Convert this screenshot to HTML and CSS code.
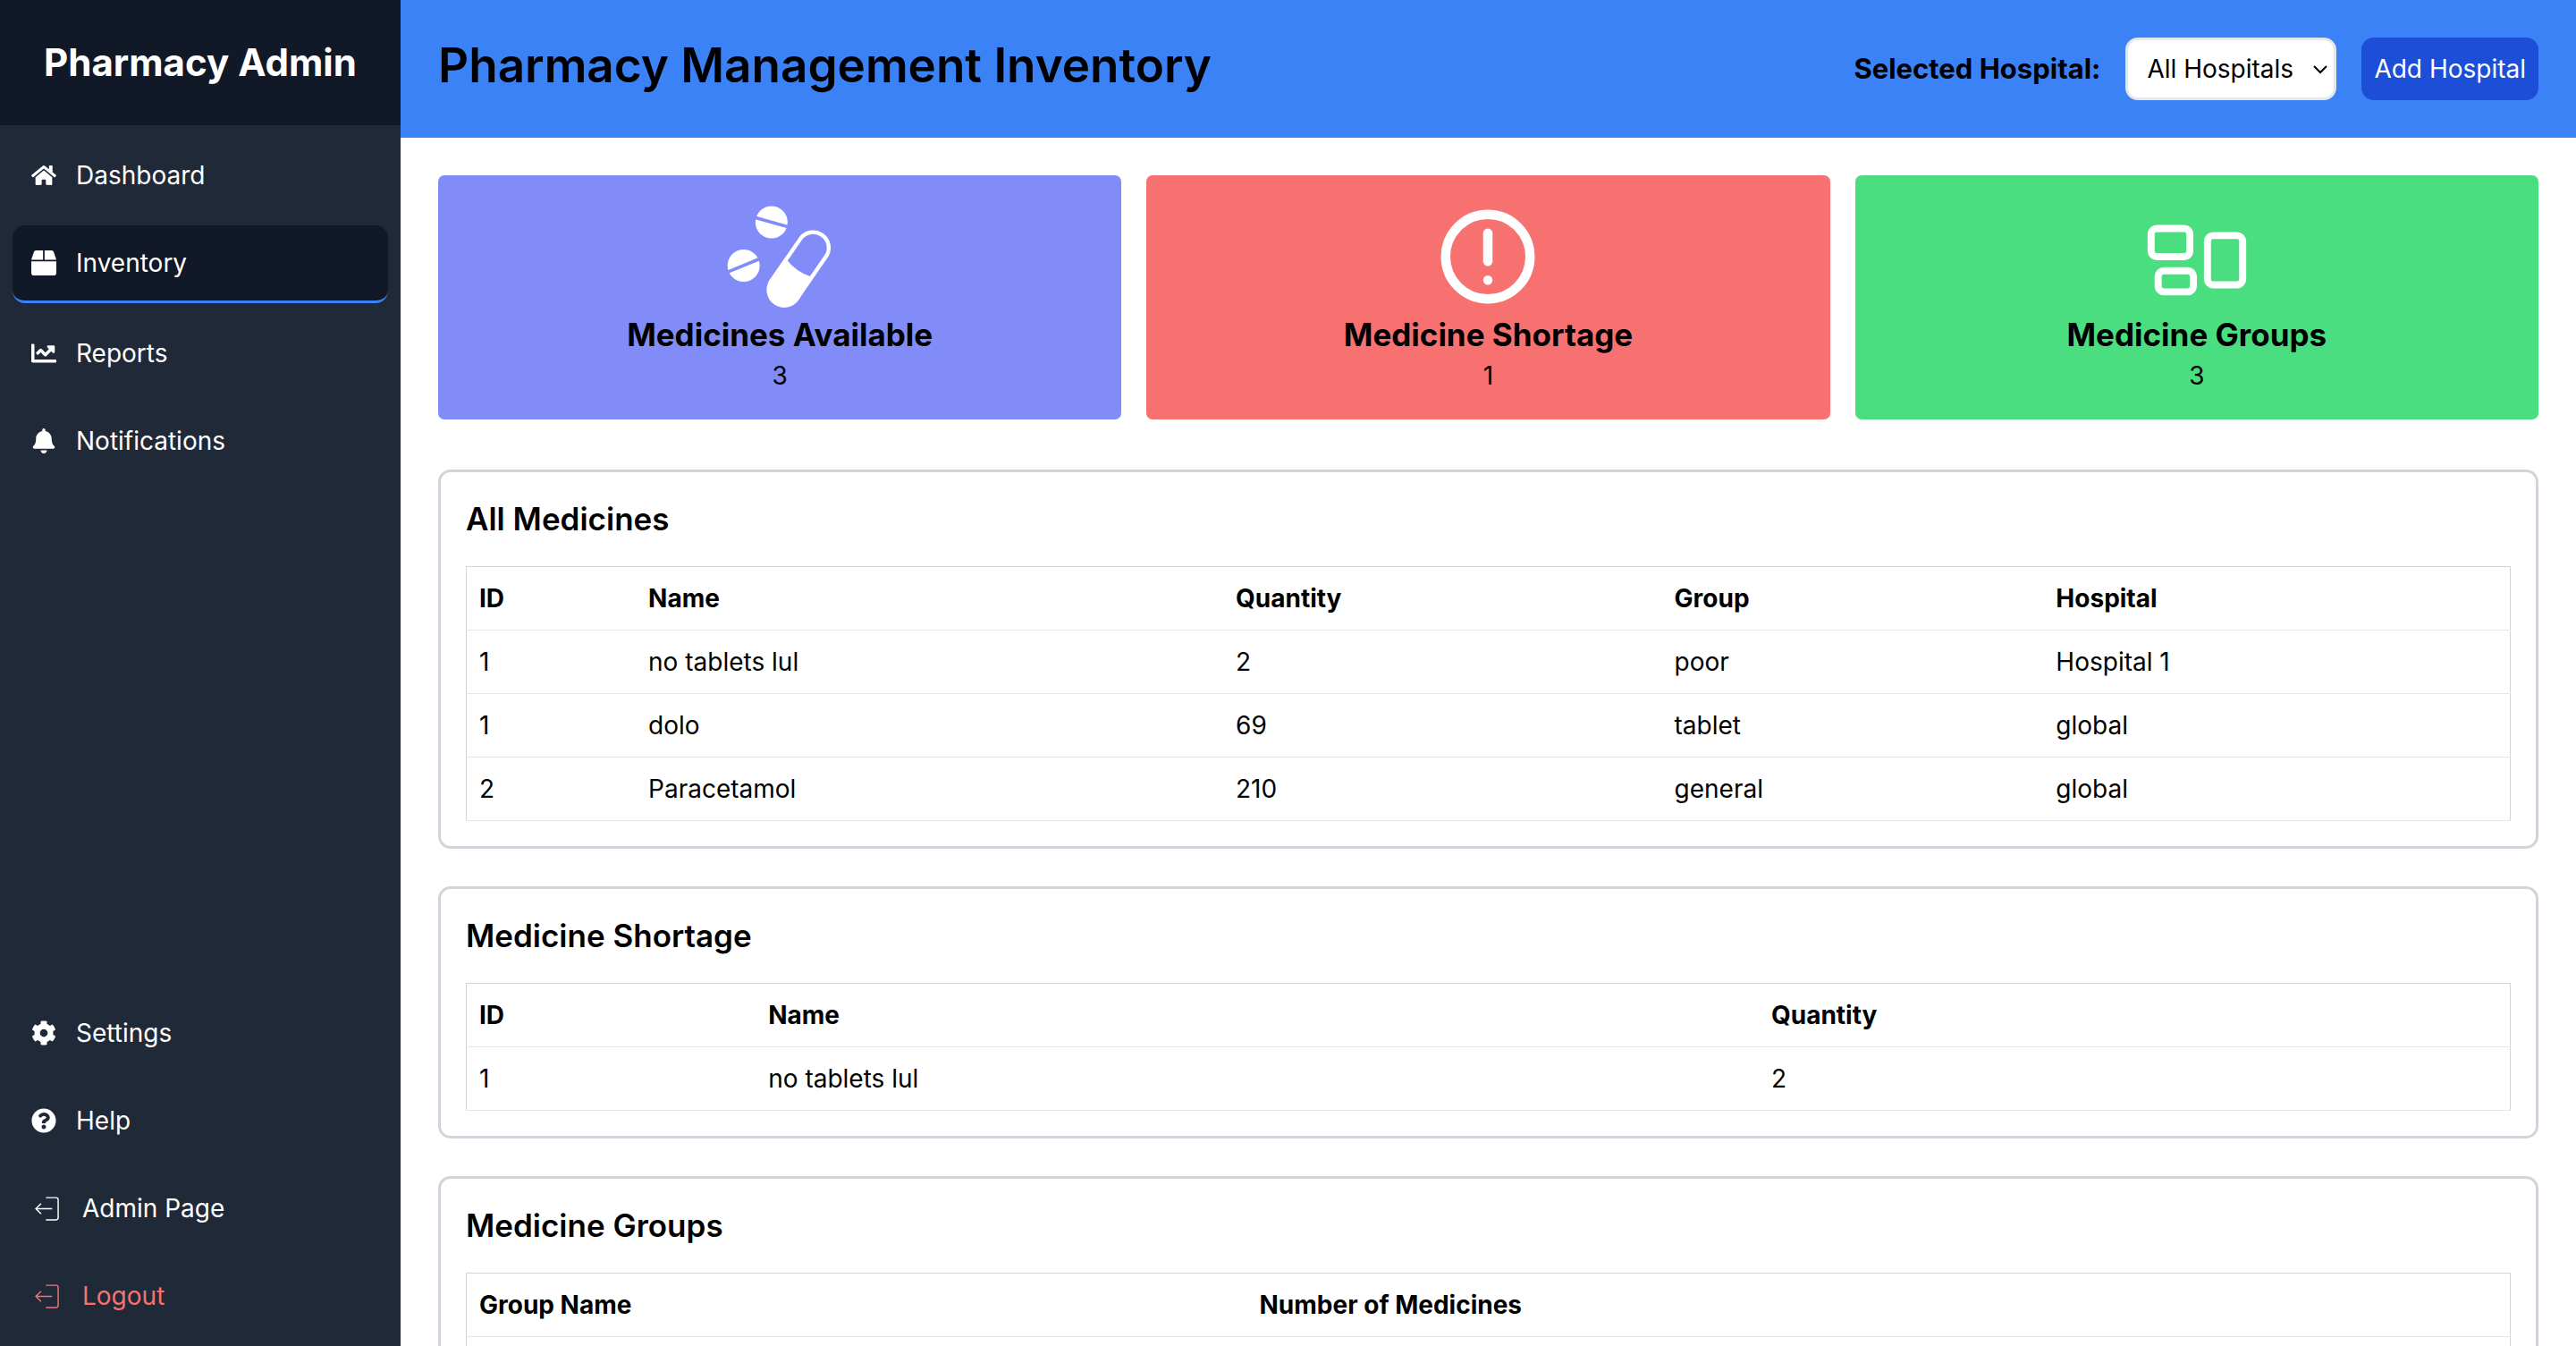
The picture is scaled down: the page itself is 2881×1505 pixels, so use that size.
FILE: index.html
```html
<!DOCTYPE html>
<html lang="en">
<head>
<meta charset="utf-8">
<title>Pharmacy Management Inventory</title>
<link rel="stylesheet" href="styles.css">
</head>
<body>
<div class="app">
  <aside class="sidebar">
    <div class="brand">Pharmacy Admin</div>
    <nav class="nav" aria-label="Main">
      <a class="nav-item" href="#dashboard">
        <svg class="nav-icon" viewBox="0 0 576 512" aria-hidden="true"><path d="M280.37 148.26L96 300.11V464a16 16 0 0 0 16 16l112.06-.29a16 16 0 0 0 15.92-16V368a16 16 0 0 1 16-16h64a16 16 0 0 1 16 16v95.64a16 16 0 0 0 16 16.05L464 480a16 16 0 0 0 16-16V300L295.67 148.26a12.19 12.19 0 0 0-15.3 0zM571.6 251.47L488 182.56V44.05a12 12 0 0 0-12-12h-56a12 12 0 0 0-12 12v72.61L318.47 43a48 48 0 0 0-61 0L4.34 251.47a12 12 0 0 0-1.6 16.9l25.5 31A12 12 0 0 0 45.15 301l235.22-193.74a12.19 12.19 0 0 1 15.3 0L530.9 301a12 12 0 0 0 16.9-1.6l25.5-31a12 12 0 0 0-1.7-16.93z"/></svg>
        <span>Dashboard</span>
      </a>
      <a class="nav-item nav-item-active" href="#inventory" aria-current="page">
        <svg class="nav-icon" viewBox="0 0 512 512" aria-hidden="true"><path d="M509.5 184.6L458.9 32.8C452.4 13.2 434.1 0 413.4 0H272v192h238.7c-.4-2.5-.4-5-1.2-7.4zM240 0H98.6c-20.7 0-39 13.2-45.5 32.8L2.5 184.6c-.8 2.4-.8 4.9-1.2 7.4H240V0zM0 224v240c0 26.5 21.5 48 48 48h416c26.5 0 48-21.5 48-48V224H0z"/></svg>
        <span>Inventory</span>
      </a>
      <a class="nav-item" href="#reports">
        <svg class="nav-icon" viewBox="0 0 512 512" aria-hidden="true"><path d="M496 384H64V80c0-8.84-7.16-16-16-16H16C7.16 64 0 71.16 0 80v336c0 17.67 14.33 32 32 32h464c8.84 0 16-7.16 16-16v-32c0-8.84-7.16-16-16-16zM464 96H345.94c-21.38 0-32.09 25.85-16.97 40.97l32.4 32.4L288 242.75l-73.37-73.37c-12.5-12.5-32.76-12.5-45.25 0l-68.69 68.69c-6.25 6.25-6.25 16.38 0 22.63l22.62 22.62c6.25 6.25 16.38 6.25 22.63 0L192 237.25l73.37 73.37c12.5 12.5 32.76 12.5 45.25 0l96-96 32.4 32.4c15.12 15.12 40.97 4.41 40.97-16.97V112c.01-8.84-7.15-16-15.99-16z"/></svg>
        <span>Reports</span>
      </a>
      <a class="nav-item" href="#notifications">
        <svg class="nav-icon" viewBox="0 0 448 512" aria-hidden="true"><path d="M224 512c35.32 0 63.97-28.65 63.97-64H160.03c0 35.35 28.65 64 63.97 64zm215.39-149.71c-19.32-20.76-55.47-51.99-55.47-154.29 0-77.7-54.48-139.9-127.94-155.16V32c0-17.67-14.32-32-31.98-32s-31.98 14.33-31.98 32v20.84C118.56 68.1 64.08 130.3 64.08 208c0 102.3-36.15 133.53-55.47 154.29-6 6.45-8.66 14.16-8.61 21.71.11 16.4 12.98 32 32.1 32h383.8c19.12 0 32-15.6 32.1-32 .05-7.55-2.61-15.27-8.61-21.71z"/></svg>
        <span>Notifications</span>
      </a>
    </nav>
    <nav class="nav nav-bottom" aria-label="Account">
      <a class="nav-item" href="#settings">
        <svg class="nav-icon" viewBox="0 0 512 512" aria-hidden="true"><path d="M487.4 315.7l-42.6-24.6c4.3-23.2 4.3-47 0-70.2l42.6-24.6c4.9-2.8 7.1-8.6 5.5-14-11.1-35.6-30-67.8-54.7-94.6-3.8-4.1-10-5.1-14.8-2.3L380.8 110c-17.9-15.4-38.5-27.3-60.8-35.1V25.8c0-5.6-3.9-10.5-9.4-11.7-36.7-8.2-74.3-7.8-109.2 0-5.5 1.2-9.4 6.1-9.4 11.7V75c-22.2 7.9-42.8 19.8-60.8 35.1L88.7 85.5c-4.9-2.8-11-1.9-14.8 2.3-24.7 26.7-43.6 58.9-54.7 94.6-1.7 5.4.6 11.2 5.5 14L67.3 221c-4.3 23.2-4.3 47 0 70.2l-42.6 24.6c-4.9 2.8-7.1 8.6-5.5 14 11.1 35.6 30 67.8 54.7 94.6 3.8 4.1 10 5.1 14.8 2.3l42.6-24.6c17.9 15.4 38.5 27.3 60.8 35.1v49.2c0 5.6 3.9 10.5 9.4 11.7 36.7 8.2 74.3 7.8 109.2 0 5.5-1.2 9.4-6.1 9.4-11.7v-49.2c22.2-7.9 42.8-19.8 60.8-35.1l42.6 24.6c4.9 2.8 11 1.9 14.8-2.3 24.7-26.7 43.6-58.9 54.7-94.6 1.5-5.5-.7-11.3-5.6-14.1zM256 336c-44.1 0-80-35.9-80-80s35.9-80 80-80 80 35.9 80 80-35.9 80-80 80z"/></svg>
        <span>Settings</span>
      </a>
      <a class="nav-item" href="#help">
        <svg class="nav-icon" viewBox="0 0 512 512" aria-hidden="true"><path d="M504 256c0 136.997-111.043 248-248 248S8 392.997 8 256C8 119.083 119.043 8 256 8s248 111.083 248 248zM262.655 90c-54.497 0-89.255 22.957-116.549 63.758-3.536 5.286-2.353 12.415 2.715 16.258l34.699 26.31c5.205 3.947 12.621 3.008 16.665-2.122 17.864-22.658 30.113-35.797 57.303-35.797 20.429 0 45.698 13.148 45.698 32.958 0 14.976-12.363 22.667-32.534 33.976C247.128 238.528 216 254.941 216 296v4c0 6.627 5.373 12 12 12h56c6.627 0 12-5.373 12-12v-1.333c0-28.462 83.186-29.647 83.186-106.667 0-58.002-60.165-102-116.531-102zM256 338c-25.365 0-46 20.635-46 46 0 25.364 20.635 46 46 46s46-20.636 46-46c0-25.364-20.635-46-46-46z"/></svg>
        <span>Help</span>
      </a>
      <a class="nav-item" href="#admin">
        <svg class="nav-icon nav-icon-large" viewBox="0 0 24 24" aria-hidden="true"><path class="line" d="M11.2 3.500H19a1.600 1.600 0 0 1 1.600 1.600v13.800a1.600 1.600 0 0 1-1.600 1.600H11.2M16 12H3.500M7.500 8 3.500 12l4 4"/></svg>
        <span>Admin Page</span>
      </a>
      <a class="nav-item nav-item-danger" href="#logout">
        <svg class="nav-icon nav-icon-large" viewBox="0 0 24 24" aria-hidden="true"><path class="line" d="M11.2 3.500H19a1.600 1.600 0 0 1 1.600 1.600v13.800a1.600 1.600 0 0 1-1.600 1.600H11.2M16 12H3.500M7.500 8 3.500 12l4 4"/></svg>
        <span>Logout</span>
      </a>
    </nav>
  </aside>

  <div class="page">
    <header class="topbar">
      <h1 class="topbar-title">Pharmacy Management Inventory</h1>
      <div class="topbar-actions">
        <label class="topbar-label" for="hospital">Selected Hospital:</label>
        <div class="select-wrap">
          <select class="select" id="hospital">
            <option>All Hospitals</option>
            <option>Hospital 1</option>
          </select>
          <svg class="select-arrow" viewBox="0 0 16 10" aria-hidden="true"><path d="M1 1l7 7 7-7"/></svg>
        </div>
        <button class="button" type="button">Add Hospital</button>
      </div>
    </header>

    <main class="content">
      <div class="stats">
        <section class="stat stat-available">
          <svg class="stat-icon" viewBox="387 102 378 378" aria-hidden="true">
            <g class="half-pill"><circle cx="548.5" cy="175.5" r="54"/><path d="M490 159l118 33"/></g>
            <g class="half-pill"><circle cx="455" cy="321" r="54"/><path d="M398 344l114-47"/></g>
            <path class="capsule-shell" d="M648 227.500A52.500 52.500 0 0 1 734.500 286L634 431.500A52.500 52.500 0 0 1 547.500 373z"/>
            <path d="M594 295Q632 345 684 359L640 436A59 59 0 0 1 542.500 369z"/>
          </svg>
          <h2 class="stat-title">Medicines Available</h2>
          <p class="stat-value">3</p>
        </section>
        <section class="stat stat-shortage">
          <svg class="stat-icon" viewBox="0 0 24 24" aria-hidden="true"><circle class="ring" cx="12" cy="12" r="9"/><path class="ring" d="M12 7v6"/><circle cx="12" cy="17" r="1"/></svg>
          <h2 class="stat-title">Medicine Shortage</h2>
          <p class="stat-value">1</p>
        </section>
        <section class="stat stat-groups">
          <svg class="stat-icon" viewBox="0 0 16 16" aria-hidden="true"><g class="line"><rect x="1.5" y="4" width="5.500" height="4" rx=".8"/><rect x="2.500" y="10" width="5" height="3" rx=".8"/><rect x="9.500" y="5" width="5" height="7" rx=".8"/></g></svg>
          <h2 class="stat-title">Medicine Groups</h2>
          <p class="stat-value">3</p>
        </section>
      </div>

      <section class="panel">
        <h2 class="panel-title">All Medicines</h2>
        <table class="table">
          <thead><tr><th>ID</th><th>Name</th><th>Quantity</th><th>Group</th><th>Hospital</th></tr></thead>
          <tbody>
            <tr><td>1</td><td>no tablets lul</td><td>2</td><td>poor</td><td>Hospital 1</td></tr>
            <tr><td>1</td><td>dolo</td><td>69</td><td>tablet</td><td>global</td></tr>
            <tr><td>2</td><td>Paracetamol</td><td>210</td><td>general</td><td>global</td></tr>
          </tbody>
        </table>
      </section>

      <section class="panel">
        <h2 class="panel-title">Medicine Shortage</h2>
        <table class="table">
          <thead><tr><th>ID</th><th>Name</th><th>Quantity</th></tr></thead>
          <tbody>
            <tr><td>1</td><td>no tablets lul</td><td>2</td></tr>
          </tbody>
        </table>
      </section>

      <section class="panel">
        <h2 class="panel-title">Medicine Groups</h2>
        <table class="table">
          <thead><tr><th>Group Name</th><th>Number of Medicines</th></tr></thead>
          <tbody>
            <tr><td>poor</td><td>1</td></tr>
            <tr><td>tablet</td><td>1</td></tr>
            <tr><td>general</td><td>1</td></tr>
          </tbody>
        </table>
      </section>
    </main>
  </div>
</div>
</body>
</html>
```
FILE: styles.css
```css
*, *::before, *::after { box-sizing: border-box; }

body {
  margin: 0;
  font-family: Inter, "Liberation Sans", sans-serif;
  font-size: 28px;
  line-height: 42px;
  color: #000;
  background: #fff;
}

h1, h2, p { margin: 0; }

svg { fill: currentColor; flex: none; }

.line { fill: none; stroke: currentColor; stroke-width: 1; }

.app { display: flex; height: 100vh; }

/* Sidebar */
.sidebar {
  display: flex;
  flex-direction: column;
  flex: none;
  width: 448px;
  color: #fff;
  background: #1f2937;
}

.brand {
  padding: 42px;
  font-size: 42px;
  font-weight: 700;
  line-height: 56px;
  text-align: center;
  white-space: nowrap;
  background: #111827;
}

.nav {
  display: flex;
  flex-direction: column;
  gap: 14px;
  padding: 14px;
}

.nav-bottom { margin-top: auto; }

.nav-item {
  display: flex;
  align-items: center;
  gap: 22px;
  padding: 21px;
  border-radius: 14px;
  color: inherit;
  text-decoration: none;
}

.nav-item-active {
  background: #111827;
  border-bottom: 3px solid #3b82f6;
}

.nav-item-danger { color: #f87171; }

.nav-icon { width: 28px; height: 28px; }

.nav-icon-large { width: 35px; height: 35px; }

/* Header */
.page {
  display: flex;
  flex-direction: column;
  flex: 1;
  min-width: 0;
  overflow-y: auto;
  scrollbar-width: none;
}

.topbar {
  display: flex;
  justify-content: space-between;
  align-items: flex-start;
  padding: 42px;
  background: #3b82f6;
}

.topbar-title {
  font-size: 53px;
  font-weight: 600;
  line-height: 63px;
}

.topbar-actions {
  display: flex;
  align-items: center;
  gap: 28px;
}

.topbar-label { font-size: 31px; font-weight: 700; }

.select-wrap { position: relative; }

.select {
  display: block;
  width: 236px;
  height: 70px;
  padding: 0 0 0 21px;
  border: 3px solid #e5e7eb;
  border-radius: 14px;
  font: inherit;
  color: #000;
  background: #fff;
  appearance: none;
}

.select-arrow {
  position: absolute;
  top: 31px;
  right: 10px;
  width: 16px;
  height: 10px;
  fill: none;
  stroke: #000;
  stroke-width: 2;
  pointer-events: none;
}

.button {
  height: 70px;
  padding: 0 14px;
  border: 0;
  border-radius: 14px;
  font: inherit;
  color: #fff;
  background: #1d4ed8;
}

/* Stat cards */
.content { padding: 42px; }

.stats {
  display: grid;
  grid-template-columns: repeat(3, 1fr);
  gap: 28px;
  margin-bottom: 56px;
}

.stat {
  display: flex;
  flex-direction: column;
  align-items: center;
  padding: 28px;
  border-radius: 7px;
}

.stat-available { background: #818cf8; }
.stat-shortage { background: #f87171; }
.stat-groups { background: #4ade80; }

.stat-icon { width: 126px; height: 126px; color: #fff; }

.half-pill path { stroke: #818cf8; stroke-width: 11; }

.capsule-shell { fill: none; stroke: currentColor; stroke-width: 13; }

.ring {
  fill: none;
  stroke: currentColor;
  stroke-width: 2;
  stroke-linecap: round;
}

.stat-title {
  font-size: 35px;
  font-weight: 700;
  line-height: 49px;
}

/* Table panels */
.panel {
  margin-bottom: 42px;
  padding: 28px;
  border: 3px solid #d1d5db;
  border-radius: 14px;
}

.panel-title {
  margin-bottom: 28px;
  font-size: 35px;
  font-weight: 600;
  line-height: 49px;
}

.table {
  width: 100%;
  border: 1px solid #d1d5db;
  border-collapse: collapse;
}

.table tr { border-bottom: 1px solid #e5e7eb; }

.table th, .table td { padding: 14px; text-align: left; }

.table th { font-weight: 700; }
```
